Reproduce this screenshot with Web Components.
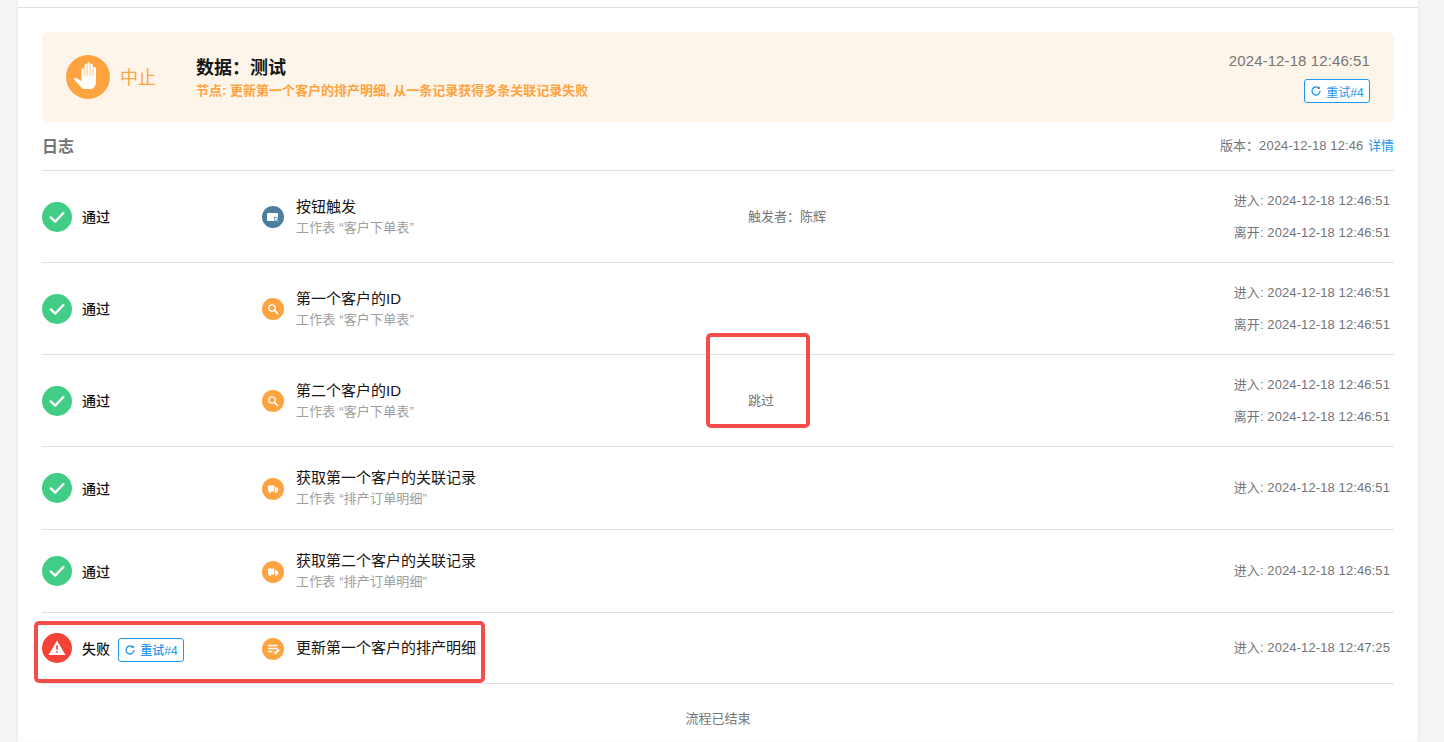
<!DOCTYPE html>
<html lang="zh">
<head>
<meta charset="utf-8">
<title>流程日志</title>
<style>
  html, body { margin: 0; height: 100%; overflow: hidden; background: #f5f5f5; }
  body { font-family: "Liberation Sans", "Noto Sans CJK SC", sans-serif; color: #151515; }
</style>
</head>
<body>
<flow-page>
  <run-banner slot="banner" when="2024-12-18 12:46:51" title="数据：测试" note="节点: 更新第一个客户的排产明细, 从一条记录获得多条关联记录失败"></run-banner>
  <log-header version="2024-12-18 12:46"></log-header>
  <log-row status="pass" icon="button" tone="#4c7d9e" name="按钮触发" sub="工作表 “客户下单表”" middle="触发者：陈辉" enter="2024-12-18 12:46:51" leave="2024-12-18 12:46:51"></log-row>
  <log-row status="pass" icon="search" name="第一个客户的ID" sub="工作表 “客户下单表”" enter="2024-12-18 12:46:51" leave="2024-12-18 12:46:51"></log-row>
  <log-row status="pass" icon="search" name="第二个客户的ID" sub="工作表 “客户下单表”" middle="跳过" enter="2024-12-18 12:46:51" leave="2024-12-18 12:46:51"></log-row>
  <log-row status="pass" icon="truck" name="获取第一个客户的关联记录" sub="工作表 “排产订单明细”" enter="2024-12-18 12:46:51"></log-row>
  <log-row status="pass" icon="truck" name="获取第二个客户的关联记录" sub="工作表 “排产订单明细”" enter="2024-12-18 12:46:51"></log-row>
  <log-row status="fail" retry icon="edit" name="更新第一个客户的排产明细" enter="2024-12-18 12:47:25"></log-row>
  <flow-end>流程已结束</flow-end>
  <mark-box slot="marks" style="left:706px;top:333px;width:96px;height:87px"></mark-box>
  <mark-box slot="marks" style="left:34px;top:621px;width:443px;height:54px"></mark-box>
</flow-page>

<script>
const refreshSvg = `<svg width="12" height="12" viewBox="0 0 12 12" fill="none"><path d="M10 6.2A4 4 0 1 1 8.7 3" stroke="#2196f3" stroke-width="1.3" stroke-linecap="round"/><path d="M9.9 1.2v2.9H7" fill="#2196f3"/></svg>`;

const nodeIcons = {
  button: `<rect x="5" y="7" width="11" height="8" rx="1.2" fill="#fff"/><path d="M12 11l4.8 1.6-1.7.9 1.6 1.8-.9.8-1.6-1.8-1 1.6z" fill="#fff" stroke="#4c7d9e" stroke-width=".8"/>`,
  search: `<circle cx="10" cy="10" r="3.2" fill="none" stroke="#fff" stroke-width="1.3"/><path d="M12.4 12.4l3.2 3.2" stroke="#fff" stroke-width="1.5" stroke-linecap="round"/>`,
  truck: `<path d="M6 7.5h6.4v6H6z" fill="#fff"/><path d="M13 9.2h1.7l1.5 1.9v2.4H13z" fill="#fff"/><circle cx="8" cy="14" r="1" fill="#fff"/><circle cx="14" cy="14" r="1" fill="#fff"/>`,
  edit: `<path d="M6 7.5h9.5M6 10.5h9.5M6 13.5h4.5" stroke="#fff" stroke-width="1.3"/><path d="M12 16.5l.5-2 3.8-3.8 1.5 1.5-3.8 3.8z" fill="#fff"/>`
};

class FlowPage extends HTMLElement {
  constructor() {
    super();
    this.attachShadow({ mode: 'open' }).innerHTML = `
      <style>
        :host { display: block; position: relative; height: 742px; overflow: hidden; }
        .sheet { margin: 0 26px 0 18px; background: linear-gradient(#fff 734px, #fcfcfc 742px); box-shadow: 0 0 4px rgba(0,0,0,.08); height: 742px; box-sizing: border-box; }
        .top { height: 7px; border-bottom: 1px solid #e0e0e0; }
        .body { padding: 24px 24px 0; }
      </style>
      <div class="sheet">
        <div class="top"></div>
        <div class="body">
          <slot name="banner"></slot>
          <slot></slot>
        </div>
      </div>
      <slot name="marks"></slot>`;
  }
}

class RunBanner extends HTMLElement {
  constructor() {
    super();
    this.attachShadow({ mode: 'open' }).innerHTML = `
      <style>
        :host { display: flex; align-items: center; height: 90px; box-sizing: border-box; padding: 0 24px; background: #fef5ea; border-radius: 6px; }
        .state { display: flex; align-items: center; gap: 10px; width: 130px; color: #ffa340; font-size: 18px; }
        .state span { margin-bottom: 2px; }
        .hand { width: 44px; height: 44px; flex: none; }
        .main { flex: 1; min-width: 0; margin-top: 2px; }
        .title { font-size: 18px; font-weight: 700; line-height: 24px; }
        .note { font-size: 13px; font-weight: 700; line-height: 20px; color: #ffa340; margin-top: 1px; }
        .side { display: flex; flex-direction: column; align-items: flex-end; gap: 9px; margin-top: 1px; }
        .when { font-size: 15px; line-height: 18px; color: #757575; letter-spacing: .1px; }
      </style>
      <div class="state">
        <svg class="hand" viewBox="0 0 44 44">
          <circle cx="22" cy="22" r="22" fill="#ffa340"/>
          <path fill="#fff" d="M15.4 14.5a1.5 1.5 0 0 1 3 0V9.9a1.5 1.5 0 0 1 2.8 0V8.8a1.5 1.5 0 0 1 3 0v1.1a1.5 1.5 0 0 1 2.8 0v3.6a1.5 1.5 0 0 1 3 0v13.2c0 3.4-2 7.3-6 7.3h-4.7c-1.8 0-3.1-.8-4.2-2.1l-6.6-6.9c-1.2-1.3.7-3 2.1-1.9l4.8 3.2z"/>
          <path stroke="#ffa340" stroke-width=".6" d="M18.4 13.5v7M21.2 10v10.5M24.2 10v10.5M27 13.5v7"/>
        </svg>
        <span id="state">中止</span>
      </div>
      <div class="main">
        <div class="title"></div>
        <div class="note"></div>
      </div>
      <div class="side">
        <div class="when"></div>
        <retry-button></retry-button>
      </div>`;
  }
  connectedCallback() {
    const root = this.shadowRoot;
    root.querySelector('.title').textContent = this.getAttribute('title');
    root.querySelector('.note').textContent = this.getAttribute('note');
    root.querySelector('.when').textContent = this.getAttribute('when');
    this.removeAttribute('title');
  }
}

class RetryButton extends HTMLElement {
  constructor() {
    super();
    this.attachShadow({ mode: 'open' }).innerHTML = `
      <style>
        :host { display: inline-flex; align-items: center; justify-content: center; gap: 4px; box-sizing: border-box; width: 66px; height: 24px; background: #fff; border: 1px solid #2196f3; border-radius: 3px; color: #2196f3; font-size: 12px; }
      </style>
      ${refreshSvg}<span>重试#4</span>`;
  }
}

class LogHeader extends HTMLElement {
  constructor() {
    super();
    this.attachShadow({ mode: 'open' }).innerHTML = `
      <style>
        :host { display: flex; align-items: center; justify-content: space-between; height: 48px; border-bottom: 1px solid #e0e0e0; box-sizing: content-box; }
        .name { font-size: 16px; font-weight: 700; color: #757575; margin-bottom: 2px; }
        .ver { font-size: 13px; color: #757575; margin-bottom: 3px; }
        .ver span { letter-spacing: .1px; }
        .ver a { color: #2196f3; margin-left: 1px; text-decoration: none; }
      </style>
      <div class="name">日志</div>
      <div class="ver">版本：<span id="v"></span> <a>详情</a></div>`;
  }
  connectedCallback() {
    this.shadowRoot.querySelector('#v').textContent = this.getAttribute('version');
  }
}

class LogRow extends HTMLElement {
  constructor() {
    super();
    this.attachShadow({ mode: 'open' }).innerHTML = `
      <style>
        :host { display: grid; grid-template-columns: 220px 486px 1fr auto; align-items: center; padding: 20px 4px 20px 0; border-bottom: 1px solid #e0e0e0; }
        .status { display: flex; align-items: center; font-size: 14px; font-weight: 500; }
        .status svg { width: 30px; height: 30px; flex: none; margin-right: 10px; }
        .status span { margin-bottom: 1px; }
        .status retry-button { margin: 3px 0 0 8px; }
        .node { display: flex; align-items: center; gap: 12px; }
        .node svg { width: 22px; height: 22px; flex: none; margin-top: 1px; }
        .name { font-size: 15px; line-height: 22px; }
        .sub { font-size: 13px; line-height: 20px; color: #9e9e9e; letter-spacing: .15px; }
        .middle { font-size: 13px; color: #757575; margin-bottom: 2px; }
        .times { display: flex; flex-direction: column; gap: 13px; font-size: 13px; line-height: 19px; color: #757575; text-align: right; letter-spacing: .1px; }
        .times.single { margin-bottom: 2px; }
      </style>
      <div class="status"></div>
      <div class="node"></div>
      <div class="middle"></div>
      <div class="times"></div>`;
  }
  connectedCallback() {
    const root = this.shadowRoot;
    const fail = this.getAttribute('status') === 'fail';
    const status = root.querySelector('.status');
    status.innerHTML = fail
      ? `<svg viewBox="0 0 30 30"><circle cx="15" cy="15" r="15" fill="#f44336"/><path d="M15 7.5l8.5 14.5h-17z" fill="#fff"/><path d="M15 12.2v4.6M15 18.2v1.6" stroke="#f44336" stroke-width="1.6"/></svg><span>失败</span>`
      : `<svg viewBox="0 0 30 30"><circle cx="15" cy="15" r="15" fill="#41cd86"/><path d="M8.8 15.4l4.4 4.2 8.2-8.6" fill="none" stroke="#fff" stroke-width="2.4" stroke-linecap="round" stroke-linejoin="round"/></svg><span>通过</span>`;
    if (this.hasAttribute('retry')) status.appendChild(document.createElement('retry-button'));

    const tone = this.getAttribute('tone') || '#ffa340';
    const node = root.querySelector('.node');
    node.innerHTML = `<svg viewBox="0 0 22 22"><circle cx="11" cy="11" r="11" fill="${tone}"/>${nodeIcons[this.getAttribute('icon')]}</svg><div><div class="name"></div></div>`;
    node.querySelector('.name').textContent = this.getAttribute('name');
    if (this.hasAttribute('sub')) {
      const sub = document.createElement('div');
      sub.className = 'sub';
      sub.textContent = this.getAttribute('sub');
      node.querySelector('.name').after(sub);
    }

    root.querySelector('.middle').textContent = this.getAttribute('middle') || '';

    const times = root.querySelector('.times');
    [['进入', 'enter'], ['离开', 'leave']].forEach(([label, attr]) => {
      if (!this.hasAttribute(attr)) return;
      const line = document.createElement('div');
      line.textContent = `${label}: ${this.getAttribute(attr)}`;
      times.appendChild(line);
    });
    if (!this.hasAttribute('leave')) times.classList.add('single');
  }
}

class FlowEnd extends HTMLElement {
  constructor() {
    super();
    this.attachShadow({ mode: 'open' }).innerHTML = `
      <style>
        :host { display: block; padding-top: 25px; line-height: 20px; font-size: 13px; color: #757575; text-align: center; }
      </style>
      <slot></slot>`;
  }
}

class MarkBox extends HTMLElement {
  constructor() {
    super();
    this.attachShadow({ mode: 'open' }).innerHTML = `
      <style>
        :host { display: block; position: absolute; border: 4px solid #f44c4a; border-radius: 5px; pointer-events: none; }
      </style>`;
  }
}

customElements.define('retry-button', RetryButton);
customElements.define('flow-page', FlowPage);
customElements.define('run-banner', RunBanner);
customElements.define('log-header', LogHeader);
customElements.define('log-row', LogRow);
customElements.define('flow-end', FlowEnd);
customElements.define('mark-box', MarkBox);
</script>
</body>
</html>
